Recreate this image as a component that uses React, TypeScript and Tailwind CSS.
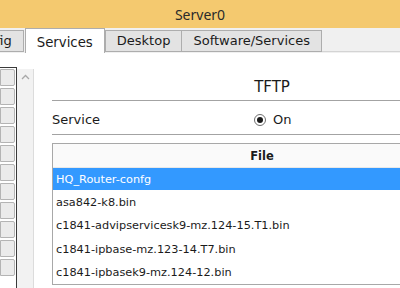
const files = [
  "HQ_Router-confg",
  "asa842-k8.bin",
  "c1841-advipservicesk9-mz.124-15.T1.bin",
  "c1841-ipbase-mz.123-14.T7.bin",
  "c1841-ipbasek9-mz.124-12.bin",
];

const sideButtons = Array.from({ length: 11 }, (_, i) => i);

function Tab({ label, active, className = "" }: { label: string; active?: boolean; className?: string }) {
  if (active) {
    return (
      <div
        className={`h-[25px] px-[11px] pt-[3px] flex items-center bg-white border-t border-l border-r border-[#adadad] text-[13.3px] ${className}`}
      >
        {label}
      </div>
    );
  }
  return (
    <div
      className={`h-[22px] px-[11px] flex items-center bg-[#e3e3e3] border border-[#adadad] text-[13px] ${className}`}
    >
      {label}
    </div>
  );
}

export default function App() {
  return (
    <div className="w-[400px] h-[288px] overflow-hidden bg-white text-[#1b1b1b] font-['DejaVu_Sans',sans-serif]">
      <div className="h-[28px] bg-[#f4c96f] flex items-center justify-center pt-[1px] font-['Noto_Sans',sans-serif] text-[14px] text-[#2a2a2a]">
        Server0
      </div>

      <div className="h-[25px] bg-[#f0f0f0] flex items-end">
        <Tab label="Config" className="-ml-[42px] mb-[1px]" />
        <div className="w-[1px]" />
        <Tab label="Services" active />
        <Tab label="Desktop" className="mb-[1px]" />
        <Tab label="Software/Services" className="-ml-px mb-[1px]" />
        <div className="flex-1 h-[1px] mb-[1px] bg-[#d4d4d4]" />
      </div>

      <div className="flex h-[235px]">
        <div className="mt-[14px] w-[17px] shrink-0 border-t border-r border-[#3a3a3a] flex flex-col gap-[2px] pt-[1px]">
          {sideButtons.map((i) => (
            <div key={i} className="h-[17px] w-[15px] bg-[#ebebeb] border border-[#b4b4b4] rounded-r-[2px]" />
          ))}
        </div>

        <div className="mt-[16px] w-[17px] shrink-0 bg-[#f2f2f2] border-r border-[#dcdcdc] flex justify-center">
          <svg width="9" height="6" viewBox="0 0 9 6" className="mt-[5px]">
            <path d="M1 5 L4.5 1.5 L8 5" fill="none" stroke="#a8a8a8" strokeWidth="1.3" />
          </svg>
        </div>

        <div className="ml-[18px] w-[440px] shrink-0 flex flex-col">
          <div className="h-[47px] flex items-end justify-center pb-[2px] text-[15px]">TFTP</div>
          <div className="h-[35px] pt-[4px] border-t border-b border-[#a3a3a3] flex items-center">
            <div className="w-[202px] text-[13px]">Service</div>
            <div className="w-[12px] h-[12px] rounded-full border border-[#6e6e6e] bg-white flex items-center justify-center">
              <div className="w-[6px] h-[6px] rounded-full bg-[#1a1a1a]" />
            </div>
            <div className="ml-[7px] text-[13px]">On</div>
          </div>

          <div className="mt-[8px] w-[422px] border border-[#a8a8a8] flex flex-col">
            <div className="h-[24px] pt-[3px] bg-[#fafafa] border-b border-[#e8e8e8] flex items-center justify-center pr-[2px] text-[11.5px] font-bold">
              File
            </div>
            {files.map((f, i) => (
              <div
                key={f}
                className={
                  i === 0
                    ? "h-[22px] pt-[2px] bg-[#3399ff] text-white flex items-center pl-[3px] text-[11.3px]"
                    : "h-[23.5px] pt-[3px] flex items-center pl-[3px] text-[11.3px]"
                }
              >
                {f}
              </div>
            ))}
          </div>
        </div>
      </div>
    </div>
  );
}
